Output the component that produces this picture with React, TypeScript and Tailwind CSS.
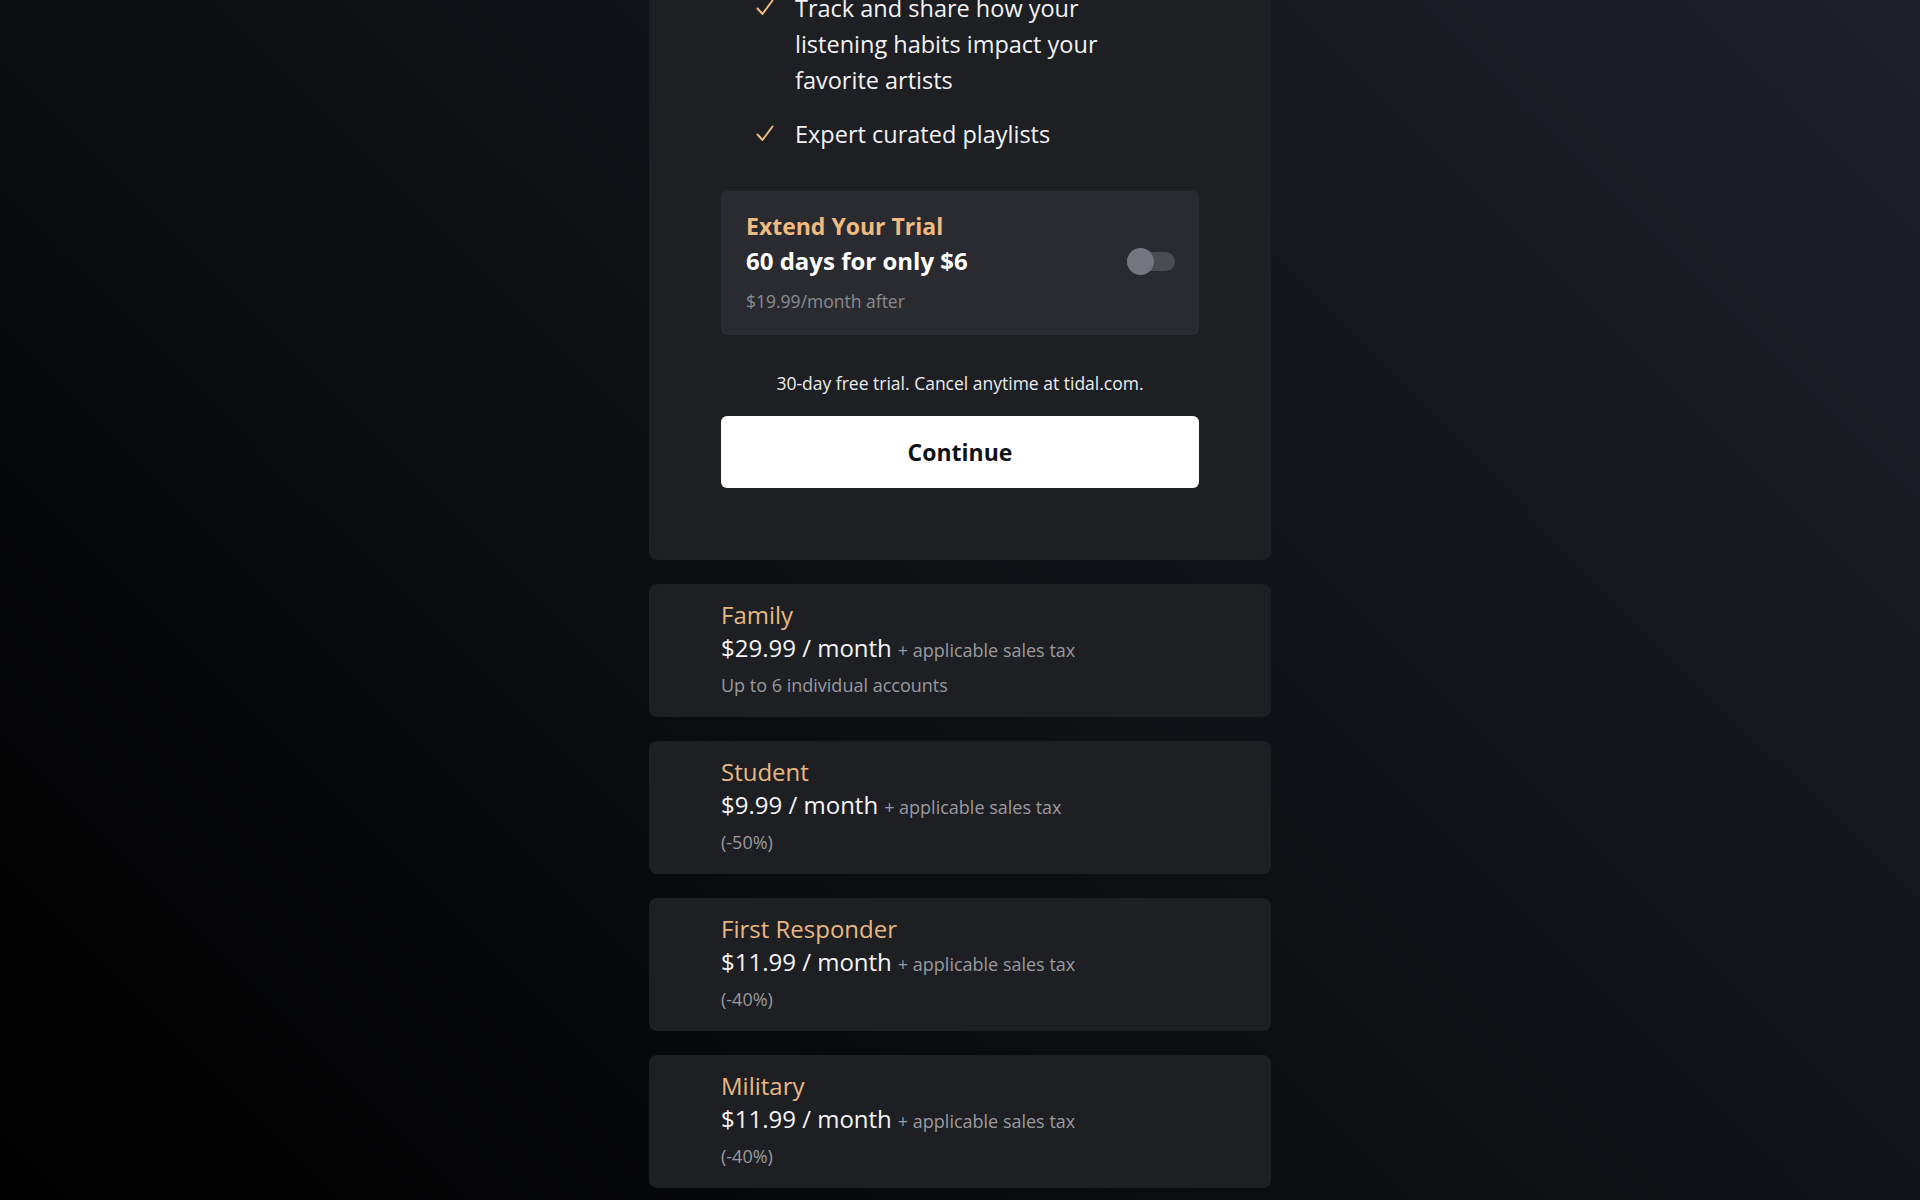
import { useState } from 'react'

const features = [
  'Track and share how your listening habits impact your favorite artists',
  'Expert curated playlists',
]

const plans = [
  { name: 'Family', price: '$29.99', note: 'Up to 6 individual accounts' },
  { name: 'Student', price: '$9.99', note: '(-50%)' },
  { name: 'First Responder', price: '$11.99', note: '(-40%)' },
  { name: 'Military', price: '$11.99', note: '(-40%)' },
]

function Check() {
  return (
    <svg width="20" height="20" viewBox="0 0 20 20" fill="none" className="shrink-0">
      <path d="M2.5 10.5 L7.5 16 L17.5 2.5" stroke="#f0b97c" strokeWidth="2" strokeLinecap="round" strokeLinejoin="round" />
    </svg>
  )
}

export default function App() {
  const [extend, setExtend] = useState(false)

  return (
    <div
      className="h-[1200px] overflow-hidden bg-[linear-gradient(225deg,#1d2027_0%,#0e1014_50%,#000_100%)] text-white"
      style={{ fontFamily: '"Open Sans", Lato, sans-serif' }}
    >
      <div className="mx-auto flex w-[622px] flex-col gap-6">
        {/* Plan card (scrolled, top cut off) */}
        <div className="rounded-b-lg bg-[#1d1f23] px-[72px] pb-[72px]">
          <ul className="-mt-[10px] flex flex-col gap-[18px] pl-[34px]">
            {features.map((f) => (
              <li key={f} className="flex items-start gap-5">
                <div className="flex h-9 items-center">
                  <Check />
                </div>
                <span className="max-w-[320px] text-[23.5px] leading-9 text-[#f2f2f4]">{f}</span>
              </li>
            ))}
          </ul>

          <div className="mt-[39px] flex items-center justify-between rounded-md bg-[#2a2b30] pt-5 pb-[18px] pr-6 pl-[25px]">
            <div className="flex flex-col">
              <span className="text-[23px] font-bold leading-[30px] text-[#f0bb80]">Extend Your Trial</span>
              <span className="text-[24px] font-bold leading-10 text-white">60 days for only $6</span>
              <span className="mt-1 text-[17.5px] leading-8 text-[#8b8b91]">$19.99/month after</span>
            </div>
            <button
              onClick={() => setExtend(!extend)}
              className="relative mb-[6px] flex h-[27px] w-12 items-center"
            >
              <span className={extend ? 'h-[19px] w-12 rounded-full bg-[#a77f52]' : 'h-[19px] w-12 rounded-full bg-[#4b4c51]'} />
              <span
                className={
                  extend
                    ? 'absolute right-0 top-0 h-[27px] w-[27px] rounded-full bg-[#f0bb80]'
                    : 'absolute left-0 top-0 h-[27px] w-[27px] rounded-full bg-[#75767d]'
                }
              />
            </button>
          </div>

          <p className="mt-9 text-center text-[17.5px] leading-6 text-[#ececee]">
            30-day free trial. Cancel anytime at tidal.com.
          </p>

          <button className="mt-[21px] h-[72px] w-full rounded-md bg-white text-[23px] font-bold text-[#111216]">
            Continue
          </button>
        </div>

        {plans.map((p) => (
          <div key={p.name} className="flex h-[133px] flex-col rounded-lg bg-[#1d1f23] px-[72px] pt-4">
            <span className="text-[24px] leading-[30px] text-[#e8b882]">{p.name}</span>
            <div className="flex items-baseline gap-[6px] leading-9">
              <span className="text-[24px] text-[#f4f4f6]">{p.price} / month</span>
              <span className="text-[18px] text-[#9a9aa0]">+ applicable sales tax</span>
            </div>
            <span className="text-[18px] leading-[34px] text-[#9a9aa0]">{p.note}</span>
          </div>
        ))}
      </div>
    </div>
  )
}
